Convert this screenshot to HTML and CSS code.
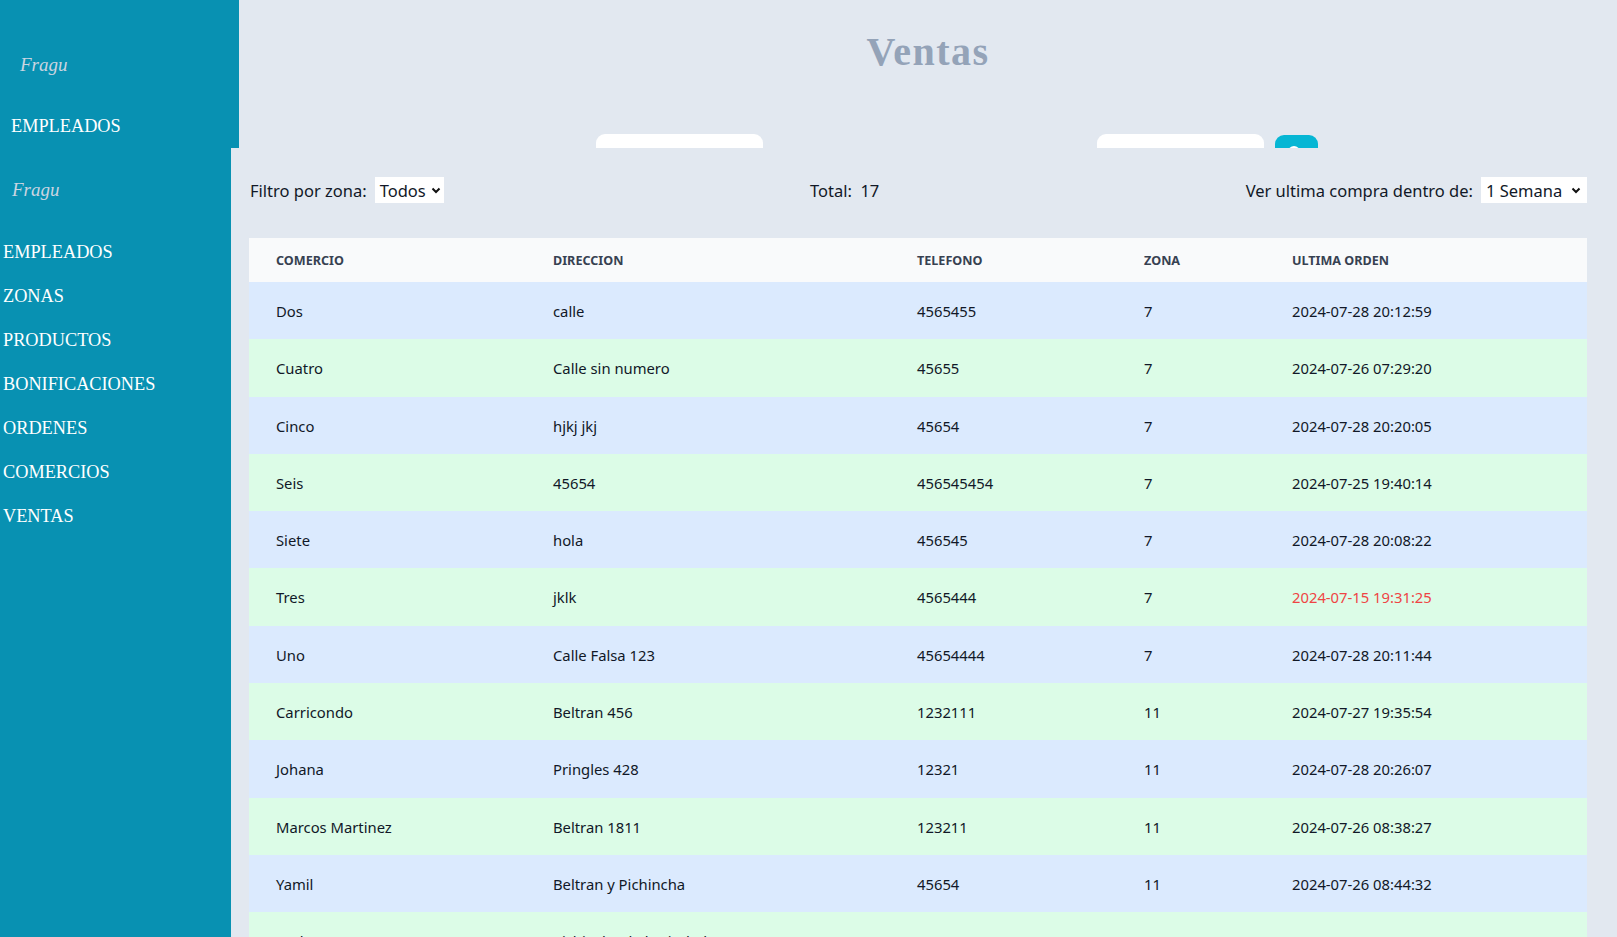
FILE: index.html
```html
<!DOCTYPE html>
<html lang="es">
<head>
<meta charset="utf-8">
<title>Ventas</title>
<link rel="stylesheet" href="styles.css">
</head>
<body>
<div class="top">
  <aside class="top-side">
    <div class="brand top-brand">Fragu</div>
    <ul class="nav top-nav">
      <li>EMPLEADOS</li>
    </ul>
  </aside>
  <header class="top-main">
    <h1 class="title">Ventas</h1>
    <div class="search-row">
      <div class="field field-a"></div>
      <div class="field field-b"></div>
      <div class="search-btn">
        <svg width="18" height="18" viewBox="0 0 18 18"><circle cx="7" cy="7" r="5" fill="none" stroke="#fff" stroke-width="2"/><path d="M11 11l4 4" stroke="#fff" stroke-width="2" stroke-linecap="round"/></svg>
      </div>
    </div>
  </header>
</div>

<div class="page">
  <aside class="side">
    <div class="brand">Fragu</div>
    <ul class="nav">
      <li>EMPLEADOS</li>
      <li>ZONAS</li>
      <li>PRODUCTOS</li>
      <li>BONIFICACIONES</li>
      <li>ORDENES</li>
      <li>COMERCIOS</li>
      <li>VENTAS</li>
    </ul>
  </aside>
  <main class="main">
    <div class="filters">
      <div class="filter">
        <span>Filtro por zona:</span>
        <div class="select sel-zona"><span>Todos</span><svg class="chev" width="10" height="7" viewBox="0 0 10 7"><path d="M1.5 1.5L5 5l3.5-3.5" fill="none" stroke="#111" stroke-width="2"/></svg></div>
      </div>
      <div class="total">Total:&nbsp; 17</div>
      <div class="filter">
        <span>Ver ultima compra dentro de:</span>
        <div class="select sel-sem"><span>1 Semana</span><svg class="chev" width="10" height="7" viewBox="0 0 10 7"><path d="M1.5 1.5L5 5l3.5-3.5" fill="none" stroke="#111" stroke-width="2"/></svg></div>
      </div>
    </div>

    <table class="tbl">
      <colgroup>
        <col class="c1"><col class="c2"><col class="c3"><col class="c4"><col class="c5">
      </colgroup>
      <thead>
        <tr><th>Comercio</th><th>Direccion</th><th>Telefono</th><th>Zona</th><th>Ultima orden</th></tr>
      </thead>
      <tbody>
        <tr class="b"><td>Dos</td><td>calle</td><td>4565455</td><td>7</td><td>2024-07-28 20:12:59</td></tr>
        <tr class="g"><td>Cuatro</td><td>Calle sin numero</td><td>45655</td><td>7</td><td>2024-07-26 07:29:20</td></tr>
        <tr class="b"><td>Cinco</td><td>hjkj jkj</td><td>45654</td><td>7</td><td>2024-07-28 20:20:05</td></tr>
        <tr class="g"><td>Seis</td><td>45654</td><td>456545454</td><td>7</td><td>2024-07-25 19:40:14</td></tr>
        <tr class="b"><td>Siete</td><td>hola</td><td>456545</td><td>7</td><td>2024-07-28 20:08:22</td></tr>
        <tr class="g"><td>Tres</td><td>jklk</td><td>4565444</td><td>7</td><td class="late">2024-07-15 19:31:25</td></tr>
        <tr class="b"><td>Uno</td><td>Calle Falsa 123</td><td>45654444</td><td>7</td><td>2024-07-28 20:11:44</td></tr>
        <tr class="g"><td>Carricondo</td><td>Beltran 456</td><td>1232111</td><td>11</td><td>2024-07-27 19:35:54</td></tr>
        <tr class="b"><td>Johana</td><td>Pringles 428</td><td>12321</td><td>11</td><td>2024-07-28 20:26:07</td></tr>
        <tr class="g"><td>Marcos Martinez</td><td>Beltran 1811</td><td>123211</td><td>11</td><td>2024-07-26 08:38:27</td></tr>
        <tr class="b"><td>Yamil</td><td>Beltran y Pichincha</td><td>45654</td><td>11</td><td>2024-07-26 08:44:32</td></tr>
        <tr class="g"><td>Carlos</td><td>Pichincha de la ciudad</td><td>778889</td><td>11</td><td>2024-07-26 08:49:00</td></tr>
      </tbody>
    </table>
  </main>
</div>
</body>
</html>
```

FILE: styles.css
```css
html, body {
  margin: 0;
  padding: 0;
  overflow: hidden;
  height: 937px;
  background: #e2e8f0;
}

.top {
  display: flex;
  height: 148px;
  overflow: hidden;
}

.top-side {
  width: 239px;
  flex: none;
  background: #0891b2;
  padding: 55px 0 0 8px;
  box-sizing: border-box;
}

.top-main {
  flex: 1;
  background: #e2e8f0;
  padding-top: 29px;
}

.title {
  margin: 0;
  text-align: center;
  font-family: "Liberation Serif", "Times New Roman", serif;
  font-weight: bold;
  font-size: 40px;
  line-height: 46px;
  letter-spacing: 1.5px;
  color: #94a3b8;
}

.search-row {
  display: flex;
  align-items: flex-start;
  margin-top: 59px;
  padding-left: 357px;
}

.field {
  width: 167px;
  height: 36px;
  background: #fff;
  border-radius: 9px;
}

.field-b {
  margin-left: 334px;
}

.search-btn {
  width: 43px;
  height: 36px;
  margin-left: 11px;
  margin-top: 1px;
  background: #06b6d4;
  border-radius: 9px;
  box-sizing: border-box;
  padding: 10px 0 0 12px;
}

.search-btn svg {
  display: block;
}

.page {
  display: flex;
}

.side {
  width: 231px;
  flex: none;
  background: #0891b2;
  min-height: 789px;
  padding-top: 32px;
  box-sizing: border-box;
}

.brand {
  font-family: "Liberation Serif", "Times New Roman", serif;
  font-style: italic;
  font-size: 19px;
  line-height: 20px;
  color: #cbd5e1;
  padding-left: 12px;
}

.top-brand {
  padding-left: 12px;
}

.nav {
  list-style: none;
  margin: 30px 0 0;
  padding: 0 0 0 3px;
}

.top-nav {
  margin-top: 29px;
}

.nav li {
  font-family: "Liberation Serif", "Times New Roman", serif;
  font-size: 18.3px;
  line-height: 20px;
  padding: 12px 0;
  color: #ffffff;
}

.main {
  flex: 1;
  padding: 29px 30px 0 18px;
  font-family: "Noto Sans", "Open Sans", sans-serif;
  color: #1f2937;
}

.filters {
  display: flex;
  justify-content: space-between;
  align-items: center;
  height: 26px;
  font-size: 16.5px;
  color: #111827;
  padding-left: 1px;
}

.filter {
  display: flex;
  align-items: center;
  gap: 8px;
  white-space: nowrap;
}

.select {
  display: flex;
  align-items: center;
  justify-content: space-between;
  height: 26px;
  background: #fff;
  box-sizing: border-box;
  padding: 0 5px 0 5px;
  white-space: nowrap;
}

.sel-zona {
  width: 69px;
  padding-right: 3px;
}

.sel-sem {
  width: 106px;
  padding-right: 6px;
}

.chev {
  flex: none;
}

.total {
  white-space: pre;
}

.tbl {
  margin-top: 35px;
  width: 1338px;
  table-layout: fixed;
  border-collapse: collapse;
  font-size: 14.8px;
}

.c1 { width: 277px; }
.c2 { width: 364px; }
.c3 { width: 227px; }
.c4 { width: 148px; }
.c5 { width: 322px; }

.tbl th {
  background: #f9fafb;
  text-align: left;
  text-transform: uppercase;
  font-size: 12.6px;
  font-weight: bold;
  color: #374151;
  height: 44px;
  padding: 0 0 0 27px;
  box-sizing: border-box;
}

.tbl td {
  padding: 19px 0 17px 27px;
  line-height: 21.3px;
  color: #111827;
  white-space: nowrap;
}

.tbl tr.b { background: #dbeafe; }
.tbl tr.g { background: #dcfce7; }

.tbl td.late { color: #ef4444; }
```
